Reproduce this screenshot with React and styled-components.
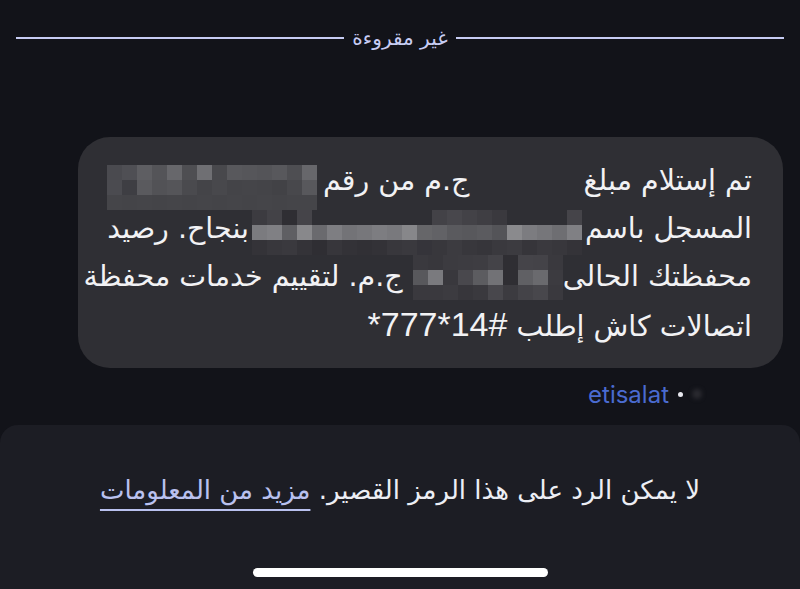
import React from 'react'
import styled, { createGlobalStyle } from 'styled-components'

const GlobalStyle = createGlobalStyle`
  html, body {
    margin: 0;
    padding: 0;
    background: #121319;
  }
  body {
    font-family: "DejaVu Sans", "Noto Sans", sans-serif;
  }
`

const Screen = styled.div`
  width: 800px;
  height: 589px;
  background: #121319;
  display: flex;
  flex-direction: column;
  overflow: hidden;
`

const DividerRow = styled.div`
  display: flex;
  align-items: center;
  gap: 8px;
  padding: 26px 16px 0;
  height: 24px;
`

const Line = styled.div`
  flex: 1;
  height: 2px;
  background: #c7ccf3;
`

const DividerLabel = styled.div`
  color: #c7ccf3;
  font-size: 20px;
  direction: rtl;
  line-height: 24px;
`

const Bubble = styled.div`
  direction: rtl;
  margin: 87px 17px 0 78px;
  padding: 19px 31px 20px 10px;
  background: #2f2f34;
  border-radius: 32px;
  color: #f2f2f4;
`

const TextRow = styled.div`
  display: flex;
  align-items: center;
  height: 48px;
  font-size: 28.5px;
  white-space: nowrap;
`

const Spacer = styled.span`
  display: inline-block;
  flex-shrink: 0;
  width: ${({ $w }) => $w}px;
`

const Mosaic = styled.div`
  display: grid;
  grid-template-columns: repeat(${({ $cols }) => $cols}, 15px);
  grid-auto-rows: 15px;
  align-self: flex-start;
  margin-top: ${({ $top }) => $top}px;
  direction: ltr;
  flex-shrink: 0;
`

const Cell = styled.div`
  background: ${({ $c }) => $c || 'transparent'};
`

const Code = styled.span`
  direction: ltr;
  unicode-bidi: isolate;
  font-family: "Liberation Sans", sans-serif;
  font-size: 34px;
`

const MetaRow = styled.div`
  display: flex;
  align-items: center;
  justify-content: flex-end;
  gap: 9px;
  padding: 12px 98px 0 0;
  height: 28px;
`

const Sender = styled.span`
  color: #4a6bd0;
  font-family: "Inter", "Roboto", sans-serif;
  font-size: 24px;
`

const Dot = styled.span`
  width: 5px;
  height: 5px;
  border-radius: 50%;
  background: #e8e8ee;
`

const Smudge = styled.span`
  width: 10px;
  height: 10px;
  border-radius: 50%;
  background: #2a2a30;
  filter: blur(2px);
`

const Panel = styled.div`
  margin-top: 17px;
  flex: 1;
  background: #1c1d24;
  border-radius: 18px 18px 0 0;
  display: flex;
  flex-direction: column;
  align-items: center;
  padding-top: 47px;
`

const Notice = styled.div`
  direction: rtl;
  color: #eceef4;
  font-size: 26px;
  line-height: 36px;
`

const Link = styled.span`
  color: #b9c1ef;
  text-decoration: underline;
  text-decoration-thickness: 2px;
  text-underline-offset: 10px;
`

const HomeBar = styled.div`
  margin-top: 60px;
  width: 295px;
  height: 9px;
  border-radius: 5px;
  background: #ffffff;
`

const block1 = [
  ['#4a4a4f', '#4f4f54', '#5e5e62', '#545458', '#67676b', '#4e4e52', '#6f6f73', '#48484c', '#58585c', '#56565a', '#545458', '#58585c', '#4e4e52', '#67676b'],
  ['#4b4b50', '#3e3e43', '#5a5a5e', '#525256', '#555559', '#4a4a4e', '#444448', '#48484c', '#444448', '#454549', '#444448', '#424246', '#48484c', '#58585c'],
  ['#454549', '#444448', '#454549', '#444448', '#454549', '#444448', '#454549', '#444448', '#454549', '#444448', '#454549', '#444448', '#454549', '#454549'],
]

const block2 = [
  ['#3c3b40', '#434247', '#2f2e33', '#454449', '', '', '', '', '', '', '', '', '#434247', '#48474c', '#434247', '#3f3e43', '#3a393e', '', '', '', '', '#454449'],
  ['#7b7b7f', '#808084', '#5f5f63', '#88888b', '#6a6a6e', '#7e7e82', '#737377', '#77777b', '#7d7d81', '#79797d', '#87878a', '#666669', '#626266', '#5a5a5e', '#58585c', '#5b5b5f', '#545458', '#8a8a8d', '#7c7c80', '#76767a', '#6e6e72', '#808084'],
  ['#343338', '#38373c', '#3a393e', '#343338', '#2f2e33', '#37363b', '#333237', '#313035', '#333237', '#38373c', '#3a393e', '#35343a', '#38373c', '#3c3b40', '#38373c', '#36353a', '#3a393e', '#3c3b40', '#36353a', '#3a393e', '#38373c', '#343338'],
]

const block3 = [
  ['#3a393e', '#38373c', '#3c3b40', '#3d3c41', '#3e3d42', '#444348', '#2f2e33', '#454449', '#444348', '#3a393e'],
  ['#58585c', '#7a7a7e', '#39383d', '#49484d', '#5c5c60', '#727276', '#2f2e33', '#606064', '#6a6a6e', '#3c3b40'],
  ['#3a393e', '#3a393e', '#3c3b40', '#37363b', '#3a393e', '#48474c', '#3c3b40', '#444348', '#48474c', '#3a393e'],
]

const Pixelated = ({ rows, top }) => (
  <Mosaic $cols={rows[0].length} $top={top}>
    {rows.flat().map((c, i) => <Cell key={i} $c={c} />)}
  </Mosaic>
)

export default function App() {
  return (
    <Screen>
      <GlobalStyle />
      <DividerRow>
        <Line />
        <DividerLabel>غير مقروءة</DividerLabel>
        <Line />
      </DividerRow>

      <Bubble>
        <TextRow>
          <span>تم إستلام مبلغ</span>
          <Spacer $w={114} />
          <span>ج.م من رقم</span>
          <Spacer $w={6} />
          <Pixelated rows={block1} top={9} />
        </TextRow>
        <TextRow>
          <span>المسجل باسم</span>
          <Spacer $w={3} />
          <Pixelated rows={block2} top={6} />
          <Spacer $w={3} />
          <span>بنجاح. رصيد</span>
        </TextRow>
        <TextRow>
          <span>محفظتك الحالى</span>
          <Pixelated rows={block3} top={3} />
          <Spacer $w={10} />
          <span>ج.م. لتقييم خدمات محفظة</span>
        </TextRow>
        <TextRow>
          <span>اتصالات كاش إطلب <Code>*777*14#</Code></span>
        </TextRow>
      </Bubble>

      <MetaRow>
        <Sender>etisalat</Sender>
        <Dot />
        <Smudge />
      </MetaRow>

      <Panel>
        <Notice>
          لا يمكن الرد على هذا الرمز القصير. <Link>مزيد من المعلومات</Link>
        </Notice>
        <HomeBar />
      </Panel>
    </Screen>
  )
}
